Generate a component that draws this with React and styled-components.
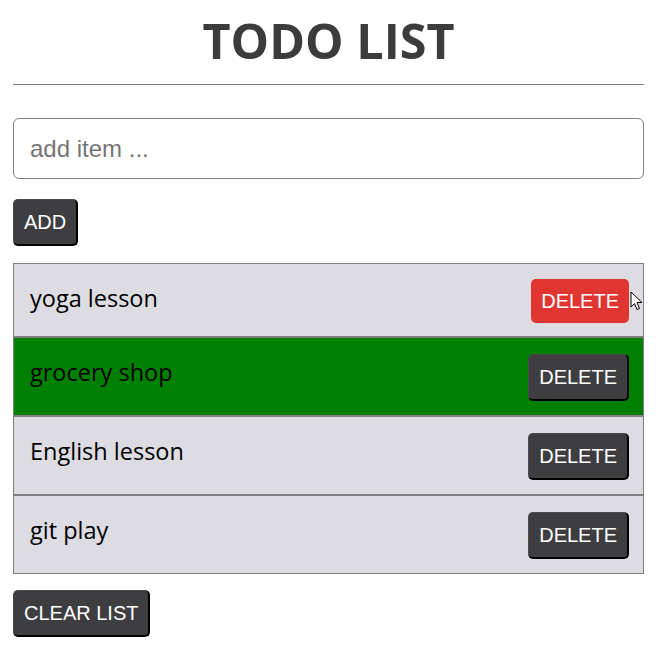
import React, { useState } from "react";
import styled, { createGlobalStyle, css } from "styled-components";

const GlobalStyle = createGlobalStyle`
  body {
    margin: 0;
    background: #ffffff;
    font-family: "Liberation Sans", Arial, sans-serif;
  }
`;

const Page = styled.div`
  width: 631px;
  margin-left: 13px;
  padding-top: 7px;
`;

const Title = styled.h1`
  margin: 0;
  text-align: center;
  font-family: "Open Sans", sans-serif;
  font-weight: 700;
  font-size: 48.5px;
  line-height: 66px;
  color: #3c3c3c;
`;

const Rule = styled.hr`
  margin: 11px 0 33px;
  border: none;
  border-top: 1px solid #808080;
`;

const Input = styled.input`
  display: block;
  box-sizing: border-box;
  width: 100%;
  height: 61px;
  padding: 0 16px;
  border: 1px solid #808080;
  border-radius: 6px;
  font-family: "Liberation Sans", Arial, sans-serif;
  font-size: 24px;
  color: #222;
  outline: none;

  &::placeholder {
    color: #757575;
  }
`;

const Button = styled.button`
  position: relative;
  box-sizing: content-box;
  padding: 10px 10px;
  border: 1px solid #4a494c;
  border-right: 2px solid #000;
  border-bottom: 2px solid #000;
  border-radius: 5px;
  background: #3e3d40;
  color: #ffffff;
  font-family: "Liberation Sans", Arial, sans-serif;
  font-size: 20px;
  line-height: 24px;
  cursor: pointer;

  ${(p) =>
    p.$hover &&
    css`
      border: none;
      margin: -1px 0;
      background: #e03530;
    `}
`;

const AddRow = styled.div`
  margin: 20px 0 17px;
`;

const List = styled.ul`
  margin: 0;
  padding: 0;
  list-style: none;
  border: 1px solid #808080;
`;

const Item = styled.li`
  display: flex;
  justify-content: space-between;
  align-items: center;
  padding: 16px 14px 14px 16px;
  background: ${(p) => (p.$done ? "#008000" : "#dcdce2")};
  border-top: 2px solid #808080;

  &:first-child {
    border-top: none;
  }
`;

const ItemText = styled.span`
  font-family: "Open Sans", "Noto Sans", sans-serif;
  font-size: 23.5px;
  line-height: 32px;
  color: #000;
  align-self: flex-start;
  margin-top: 2px;
`;

const Cursor = styled.svg`
  position: absolute;
  right: -14px;
  top: 12px;
  width: 13px;
  height: 20px;
  pointer-events: none;
`;

const Footer = styled.div`
  margin-top: 16px;
`;

const initial = [
  { id: 1, text: "yoga lesson", done: false },
  { id: 2, text: "grocery shop", done: true },
  { id: 3, text: "English lesson", done: false },
  { id: 4, text: "git play", done: false },
];

export default function App() {
  const [items, setItems] = useState(initial);
  const [value, setValue] = useState("");

  const addItem = () => {
    if (!value.trim()) return;
    setItems([...items, { id: Date.now(), text: value, done: false }]);
    setValue("");
  };

  return (
    <>
      <GlobalStyle />
      <Page>
        <Title>TODO LIST</Title>
        <Rule />
        <Input
          placeholder="add item ..."
          value={value}
          onChange={(e) => setValue(e.target.value)}
        />
        <AddRow>
          <Button onClick={addItem}>ADD</Button>
        </AddRow>
        <List>
          {items.map((item, i) => (
            <Item
              key={item.id}
              $done={item.done}
              onClick={() =>
                setItems(
                  items.map((x) =>
                    x.id === item.id ? { ...x, done: !x.done } : x
                  )
                )
              }
            >
              <ItemText>{item.text}</ItemText>
              <Button
                $hover={i === 0}
                onClick={(e) => {
                  e.stopPropagation();
                  setItems(items.filter((x) => x.id !== item.id));
                }}
              >
                DELETE
                {i === 0 && (
                  <Cursor viewBox="0 0 13 20">
                    <path
                      d="M1 1 L1 16 L4.5 12.5 L7 18.5 L9.5 17.5 L7 11.5 L12 11.5 Z"
                      fill="#fff"
                      stroke="#000"
                      strokeWidth="1"
                      strokeLinejoin="round"
                    />
                  </Cursor>
                )}
              </Button>
            </Item>
          ))}
        </List>
        <Footer>
          <Button onClick={() => setItems([])}>CLEAR LIST</Button>
        </Footer>
      </Page>
    </>
  );
}
